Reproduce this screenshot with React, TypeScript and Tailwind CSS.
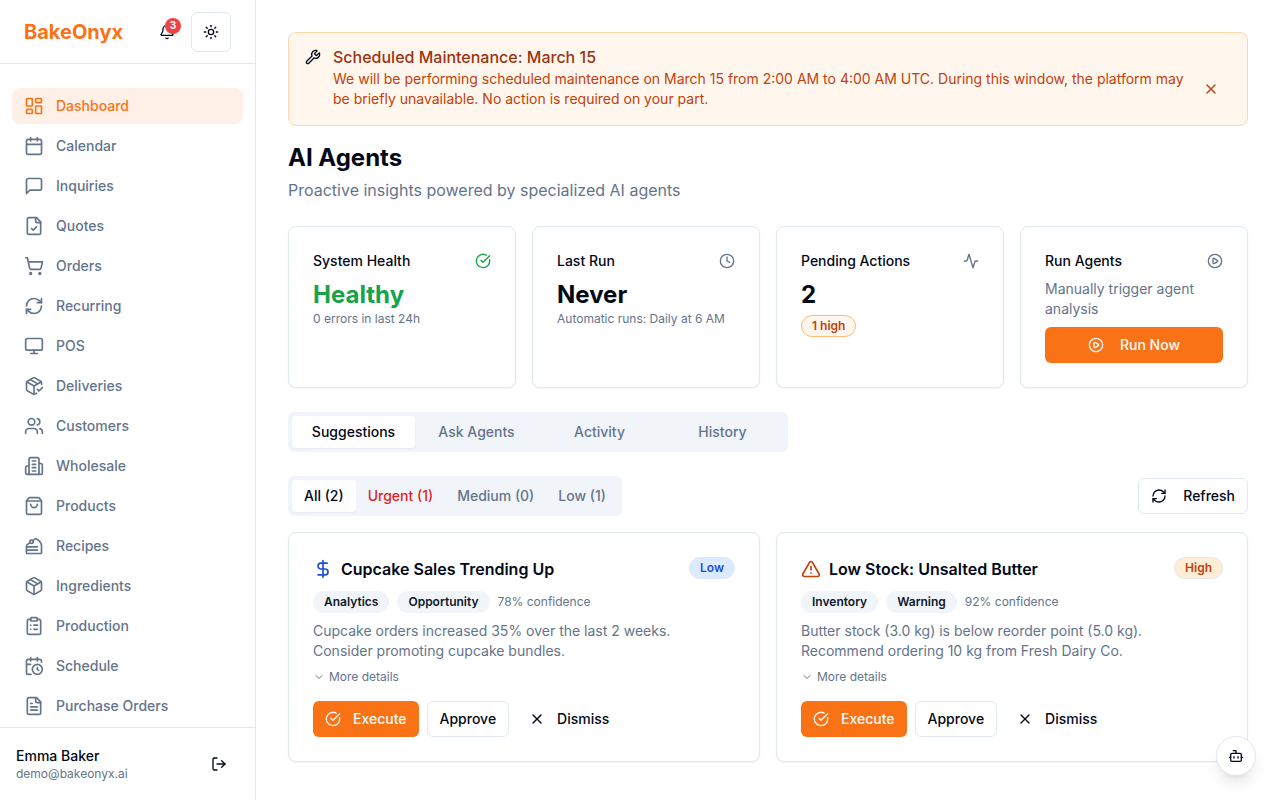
import {
  Activity,
  Bell,
  Bot,
  CakeSlice,
  Calendar,
  CalendarClock,
  ChevronDown,
  CircleCheckBig,
  CirclePlay,
  ClipboardList,
  Clock,
  DollarSign,
  LayoutDashboard,
  LogOut,
  Monitor,
  Package,
  PackageCheck,
  RefreshCw,
  ShoppingBag,
  ShoppingCart,
  Sun,
  TriangleAlert,
  Users,
  Wrench,
  X,
} from "lucide-react";

type IconProps = { className?: string };
type IconType = React.ComponentType<IconProps>;

function StrokeIcon({ className, children }: IconProps & { children: React.ReactNode }) {
  return (
    <svg
      viewBox="0 0 24 24"
      fill="none"
      stroke="currentColor"
      strokeWidth="2"
      strokeLinecap="round"
      strokeLinejoin="round"
      className={className}
      aria-hidden="true"
    >
      {children}
    </svg>
  );
}

const MessageIcon = ({ className }: IconProps) => (
  <StrokeIcon className={className}>
    <path d="M21 15a2 2 0 0 1-2 2H7l-4 4V5a2 2 0 0 1 2-2h14a2 2 0 0 1 2 2z" />
  </StrokeIcon>
);

const FileCheckIcon = ({ className }: IconProps) => (
  <StrokeIcon className={className}>
    <path d="M15 2H6a2 2 0 0 0-2 2v16a2 2 0 0 0 2 2h12a2 2 0 0 0 2-2V7Z" />
    <path d="M14 2v4a2 2 0 0 0 2 2h4" />
    <path d="m9 15 2 2 4-4" />
  </StrokeIcon>
);

const FileTextIcon = ({ className }: IconProps) => (
  <StrokeIcon className={className}>
    <path d="M15 2H6a2 2 0 0 0-2 2v16a2 2 0 0 0 2 2h12a2 2 0 0 0 2-2V7Z" />
    <path d="M14 2v4a2 2 0 0 0 2 2h4" />
    <path d="M10 9H8" />
    <path d="M16 13H8" />
    <path d="M16 17H8" />
  </StrokeIcon>
);

const BuildingIcon = ({ className }: IconProps) => (
  <StrokeIcon className={className}>
    <path d="M6 22V4a2 2 0 0 1 2-2h8a2 2 0 0 1 2 2v18Z" />
    <path d="M6 12H4a2 2 0 0 0-2 2v6a2 2 0 0 0 2 2h2" />
    <path d="M18 9h2a2 2 0 0 1 2 2v9a2 2 0 0 1-2 2h-2" />
    <path d="M10 6h4" />
    <path d="M10 10h4" />
    <path d="M10 14h4" />
    <path d="M10 18h4" />
  </StrokeIcon>
);

const navItems: { label: string; icon: IconType }[] = [
  { label: "Dashboard", icon: LayoutDashboard },
  { label: "Calendar", icon: Calendar },
  { label: "Inquiries", icon: MessageIcon },
  { label: "Quotes", icon: FileCheckIcon },
  { label: "Orders", icon: ShoppingCart },
  { label: "Recurring", icon: RefreshCw },
  { label: "POS", icon: Monitor },
  { label: "Deliveries", icon: PackageCheck },
  { label: "Customers", icon: Users },
  { label: "Wholesale", icon: BuildingIcon },
  { label: "Products", icon: ShoppingBag },
  { label: "Recipes", icon: CakeSlice },
  { label: "Ingredients", icon: Package },
  { label: "Production", icon: ClipboardList },
  { label: "Schedule", icon: CalendarClock },
  { label: "Purchase Orders", icon: FileTextIcon },
];

const filters = [
  { label: "All (2)", className: "bg-white text-[#020817] shadow-xs" },
  { label: "Urgent (1)", className: "text-[#dc2626]" },
  { label: "Medium (0)", className: "" },
  { label: "Low (1)", className: "" },
];

const suggestions = [
  {
    title: "Cupcake Sales Trending Up",
    icon: DollarSign,
    iconClass: "text-[#1d4ed8]",
    priority: "Low",
    priorityClass: "bg-[#dbeafe] text-[#1d4ed8]",
    tags: ["Analytics", "Opportunity"],
    confidence: "78% confidence",
    lines: ["Cupcake orders increased 35% over the last 2 weeks.", "Consider promoting cupcake bundles."],
  },
  {
    title: "Low Stock: Unsalted Butter",
    icon: TriangleAlert,
    iconClass: "text-[#c2410c]",
    priority: "High",
    priorityClass: "bg-[#ffedd5] text-[#c2410c]",
    tags: ["Inventory", "Warning"],
    confidence: "92% confidence",
    lines: ["Butter stock (3.0 kg) is below reorder point (5.0 kg).", "Recommend ordering 10 kg from Fresh Dairy Co."],
  },
];

function Sidebar() {
  return (
    <aside className="flex h-screen w-64 shrink-0 flex-col border-r border-[#e2e8f0] bg-white">
      <div className="flex h-16 shrink-0 items-center justify-between border-b border-[#e2e8f0] px-6">
        <a href="#" className="text-xl font-bold text-[#f97316]">
          BakeOnyx
        </a>
        <div className="flex items-center gap-1">
          <button type="button" aria-label="Notifications" className="relative flex size-10 items-center justify-center rounded-md">
            <Bell className="size-4" />
            <span className="absolute right-1.5 top-1.5 flex size-4 items-center justify-center rounded-full bg-[#ef4444] text-[10px] font-bold text-white">
              3
            </span>
          </button>
          <button
            type="button"
            aria-label="Toggle theme"
            className="flex size-10 items-center justify-center rounded-md border border-[#e2e8f0]"
          >
            <Sun className="size-4" />
          </button>
        </div>
      </div>
      <nav className="flex min-h-0 flex-1 flex-col gap-1 overflow-hidden px-3 pt-6">
        {navItems.map(({ label, icon: Icon }, i) => (
          <a
            key={label}
            href="#"
            className={`flex shrink-0 items-center gap-3 rounded-lg px-3 py-2 text-sm font-medium ${i === 0 ? "bg-[#feefe7] text-[#f97316]" : "text-[#64748b]"}`}
          >
            <Icon className="size-5" />
            {label}
          </a>
        ))}
      </nav>
      <div className="flex shrink-0 items-center justify-between border-t border-[#e2e8f0] p-4">
        <div>
          <p className="text-sm font-medium">Emma Baker</p>
          <p className="text-xs text-[#64748b]">demo@bakeonyx.ai</p>
        </div>
        <button type="button" aria-label="Log out" className="flex size-10 items-center justify-center rounded-md">
          <LogOut className="size-4" />
        </button>
      </div>
    </aside>
  );
}

function StatCard({ title, icon, children }: { title: string; icon: React.ReactNode; children: React.ReactNode }) {
  return (
    <section className="rounded-lg border border-[#e2e8f0] bg-white p-6 shadow-xs">
      <div className="flex items-center justify-between pb-2">
        <h3 className="text-sm font-medium">{title}</h3>
        {icon}
      </div>
      {children}
    </section>
  );
}

function SuggestionCard({ item }: { item: (typeof suggestions)[number] }) {
  const Icon = item.icon;
  return (
    <article className="rounded-lg border border-[#e2e8f0] bg-white p-6 shadow-xs">
      <div className="flex items-start justify-between">
        <div className="flex items-center gap-2">
          <Icon className={`size-5 ${item.iconClass}`} />
          <h3 className="text-base font-semibold">{item.title}</h3>
        </div>
        <span className={`rounded-full border border-[#e2e8f0] px-2.5 py-0.5 text-xs font-semibold ${item.priorityClass}`}>
          {item.priority}
        </span>
      </div>
      <div className="mt-2.5 flex items-center gap-2 text-xs">
        {item.tags.map((tag) => (
          <span key={tag} className="rounded-full border border-transparent bg-[#f1f5f9] px-2.5 py-0.5 font-semibold text-[#0f172a]">
            {tag}
          </span>
        ))}
        <span className="text-[#64748b]">{item.confidence}</span>
      </div>
      <p className="mt-2 text-sm text-[#64748b]">
        {item.lines[0]}
        <br />
        {item.lines[1]}
      </p>
      <button type="button" className="mt-2 flex items-center gap-1 text-xs text-[#64748b]">
        <ChevronDown className="size-3" />
        More details
      </button>
      <div className="mt-4 flex gap-2 text-sm font-medium">
        <button type="button" className="flex h-9 items-center gap-3 rounded-md bg-[#f97316] px-3 text-[#f8fafc]">
          <CircleCheckBig className="size-4" />
          Execute
        </button>
        <button type="button" className="flex h-9 items-center rounded-md border border-[#e2e8f0] px-3">
          Approve
        </button>
        <button type="button" className="flex h-9 items-center gap-3 rounded-md px-3">
          <X className="size-4" />
          Dismiss
        </button>
      </div>
    </article>
  );
}

export default function App() {
  return (
    <div className="flex h-screen bg-white font-[Inter,sans-serif] text-[#020817]">
      <Sidebar />
      <main className="min-w-0 flex-1 overflow-hidden p-8">
        <div role="alert" className="flex gap-3 rounded-lg border border-[#fed7aa] bg-[#fff7ed] p-4">
          <Wrench className="size-4 shrink-0" />
          <div className="flex-1">
            <h5 className="mb-1 font-medium leading-none text-[#9a3412]">Scheduled Maintenance: March 15</h5>
            <div className="flex items-center justify-between gap-1 text-sm text-[#c2410c]">
              <p>
                We will be performing scheduled maintenance on March 15 from 2:00 AM to 4:00 AM UTC. During this window,
                the platform may be briefly unavailable. No action is required on your part.
              </p>
              <button type="button" aria-label="Dismiss" className="flex size-10 shrink-0 items-center justify-center">
                <X className="size-4" />
              </button>
            </div>
          </div>
        </div>

        <h1 className="mt-4 text-2xl font-bold">AI Agents</h1>
        <p className="mt-1 text-[#64748b]">Proactive insights powered by specialized AI agents</p>

        <div className="mt-6 grid grid-cols-4 gap-4">
          <StatCard title="System Health" icon={<CircleCheckBig className="size-4 text-[#16a34a]" />}>
            <p className="text-2xl font-bold text-[#16a34a]">Healthy</p>
            <p className="text-xs text-[#64748b]">0 errors in last 24h</p>
          </StatCard>
          <StatCard title="Last Run" icon={<Clock className="size-4 text-[#64748b]" />}>
            <p className="text-2xl font-bold">Never</p>
            <p className="text-xs text-[#64748b]">Automatic runs: Daily at 6 AM</p>
          </StatCard>
          <StatCard title="Pending Actions" icon={<Activity className="size-4 text-[#64748b]" />}>
            <p className="text-2xl font-bold">2</p>
            <div className="mt-1 flex">
              <span className="rounded-full border border-[#fdba74] bg-[#fff7ed] px-2.5 py-0.5 text-xs font-semibold text-[#c2410c]">
                1 high
              </span>
            </div>
          </StatCard>
          <StatCard title="Run Agents" icon={<CirclePlay className="size-4 text-[#64748b]" />}>
            <p className="mb-2 text-sm text-[#64748b]">Manually trigger agent analysis</p>
            <button
              type="button"
              className="flex h-9 w-full items-center justify-center gap-4 rounded-md bg-[#f97316] px-3 text-sm font-medium text-[#f8fafc]"
            >
              <CirclePlay className="size-4" />
              Run Now
            </button>
          </StatCard>
        </div>

        <div className="mt-6 grid h-10 max-w-[500px] grid-cols-4 rounded-md bg-[#f1f5f9] p-1 text-sm font-medium text-[#64748b]">
          <button type="button" className="rounded-sm bg-white text-[#020817] shadow-xs">
            Suggestions
          </button>
          <button type="button">Ask Agents</button>
          <button type="button">Activity</button>
          <button type="button">History</button>
        </div>

        <div className="mt-6 flex items-center justify-between text-sm font-medium">
          <div className="flex h-10 rounded-md bg-[#f1f5f9] p-1 text-[#64748b]">
            {filters.map((filter) => (
              <button key={filter.label} type="button" className={`rounded-sm px-3 ${filter.className}`}>
                {filter.label}
              </button>
            ))}
          </div>
          <button type="button" className="flex h-9 items-center gap-4 rounded-md border border-[#e2e8f0] px-3">
            <RefreshCw className="size-4" />
            Refresh
          </button>
        </div>

        <div className="mt-4 grid grid-cols-2 gap-4">
          {suggestions.map((item) => (
            <SuggestionCard key={item.title} item={item} />
          ))}
        </div>
      </main>
      <button
        type="button"
        aria-label="Open assistant"
        className="fixed bottom-6 right-6 flex size-10 items-center justify-center rounded-full border border-[#e2e8f0] bg-white shadow-lg"
      >
        <Bot className="size-4" />
      </button>
    </div>
  );
}
